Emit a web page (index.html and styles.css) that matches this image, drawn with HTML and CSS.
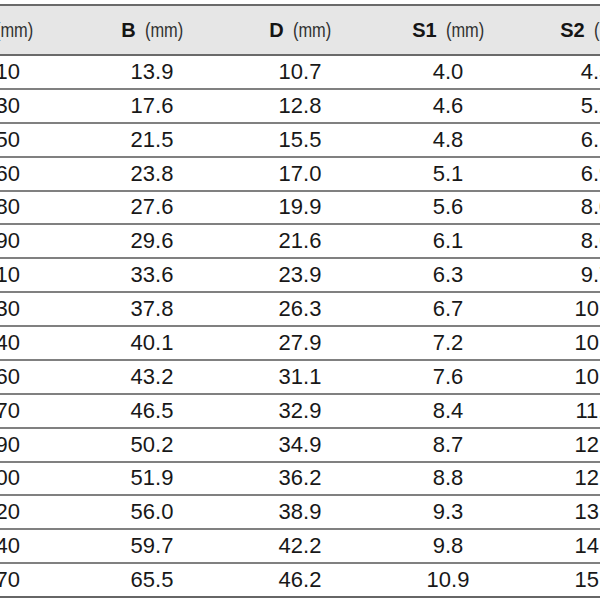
FILE: index.html
```html
<!DOCTYPE html>
<html lang="en">
<head>
<meta charset="utf-8">
<title>Dimensions table</title>
<link rel="stylesheet" href="styles.css">
</head>
<body>
<div class="table">
  <div class="row head">
    <div class="cell first"><b>A</b><span class="unit">(mm)</span></div>
    <div class="cell"><b>B</b><span class="unit">(mm)</span></div>
    <div class="cell"><b>D</b><span class="unit">(mm)</span></div>
    <div class="cell"><b>S1</b><span class="unit">(mm)</span></div>
    <div class="cell"><b>S2</b><span class="unit">(mm)</span></div>
  </div>
  <div class="row"><div class="cell first">110</div><div class="cell">13.9</div><div class="cell">10.7</div><div class="cell">4.0</div><div class="cell">4.5</div></div>
  <div class="row"><div class="cell first">130</div><div class="cell">17.6</div><div class="cell">12.8</div><div class="cell">4.6</div><div class="cell">5.2</div></div>
  <div class="row"><div class="cell first">150</div><div class="cell">21.5</div><div class="cell">15.5</div><div class="cell">4.8</div><div class="cell">6.1</div></div>
  <div class="row"><div class="cell first">160</div><div class="cell">23.8</div><div class="cell">17.0</div><div class="cell">5.1</div><div class="cell">6.9</div></div>
  <div class="row"><div class="cell first">180</div><div class="cell">27.6</div><div class="cell">19.9</div><div class="cell">5.6</div><div class="cell">8.0</div></div>
  <div class="row"><div class="cell first">190</div><div class="cell">29.6</div><div class="cell">21.6</div><div class="cell">6.1</div><div class="cell">8.6</div></div>
  <div class="row"><div class="cell first">210</div><div class="cell">33.6</div><div class="cell">23.9</div><div class="cell">6.3</div><div class="cell">9.7</div></div>
  <div class="row"><div class="cell first">230</div><div class="cell">37.8</div><div class="cell">26.3</div><div class="cell">6.7</div><div class="cell">10.9</div></div>
  <div class="row"><div class="cell first">240</div><div class="cell">40.1</div><div class="cell">27.9</div><div class="cell">7.2</div><div class="cell">10.6</div></div>
  <div class="row"><div class="cell first">260</div><div class="cell">43.2</div><div class="cell">31.1</div><div class="cell">7.6</div><div class="cell">10.8</div></div>
  <div class="row"><div class="cell first">270</div><div class="cell">46.5</div><div class="cell">32.9</div><div class="cell">8.4</div><div class="cell">11.9</div></div>
  <div class="row"><div class="cell first">290</div><div class="cell">50.2</div><div class="cell">34.9</div><div class="cell">8.7</div><div class="cell">12.5</div></div>
  <div class="row"><div class="cell first">300</div><div class="cell">51.9</div><div class="cell">36.2</div><div class="cell">8.8</div><div class="cell">12.9</div></div>
  <div class="row"><div class="cell first">320</div><div class="cell">56.0</div><div class="cell">38.9</div><div class="cell">9.3</div><div class="cell">13.8</div></div>
  <div class="row"><div class="cell first">340</div><div class="cell">59.7</div><div class="cell">42.2</div><div class="cell">9.8</div><div class="cell">14.7</div></div>
  <div class="row last"><div class="cell first">370</div><div class="cell">65.5</div><div class="cell">46.2</div><div class="cell">10.9</div><div class="cell">15.6</div></div>
</div>
</body>
</html>
```
FILE: styles.css
```css
html, body {
  margin: 0;
  padding: 0;
  background: #ffffff;
  overflow: hidden;
}
.table {
  margin-top: 4px;
  width: 670px;
  font-family: "Liberation Sans", Arial, sans-serif;
  color: #181818;
}
.row {
  display: grid;
  grid-template-columns: 78px 148px 148px 148px 148px;
  height: 33.875px;
  box-sizing: border-box;
  border-bottom: 2px solid #808080;
  font-size: 22px;
}
.row.last {
  border-bottom-color: #666666;
}
.row.head {
  height: 52px;
  background: #e6e6e6;
  border-top: 2px solid #6a6a6a;
  border-bottom: 2px solid #6a6a6a;
  font-size: 20px;
}
.cell {
  display: flex;
  align-items: center;
  justify-content: center;
  white-space: nowrap;
}
.cell.first {
  justify-content: flex-end;
  padding-right: 58px;
}
.head .cell.first {
  padding-right: 45px;
}
.head b {
  font-weight: 700;
  color: #151515;
}
.unit {
  display: inline-block;
  margin-left: 9px;
  margin-right: -8.4px;
  transform: scaleX(0.82);
  transform-origin: left center;
  color: #303030;
}
```
